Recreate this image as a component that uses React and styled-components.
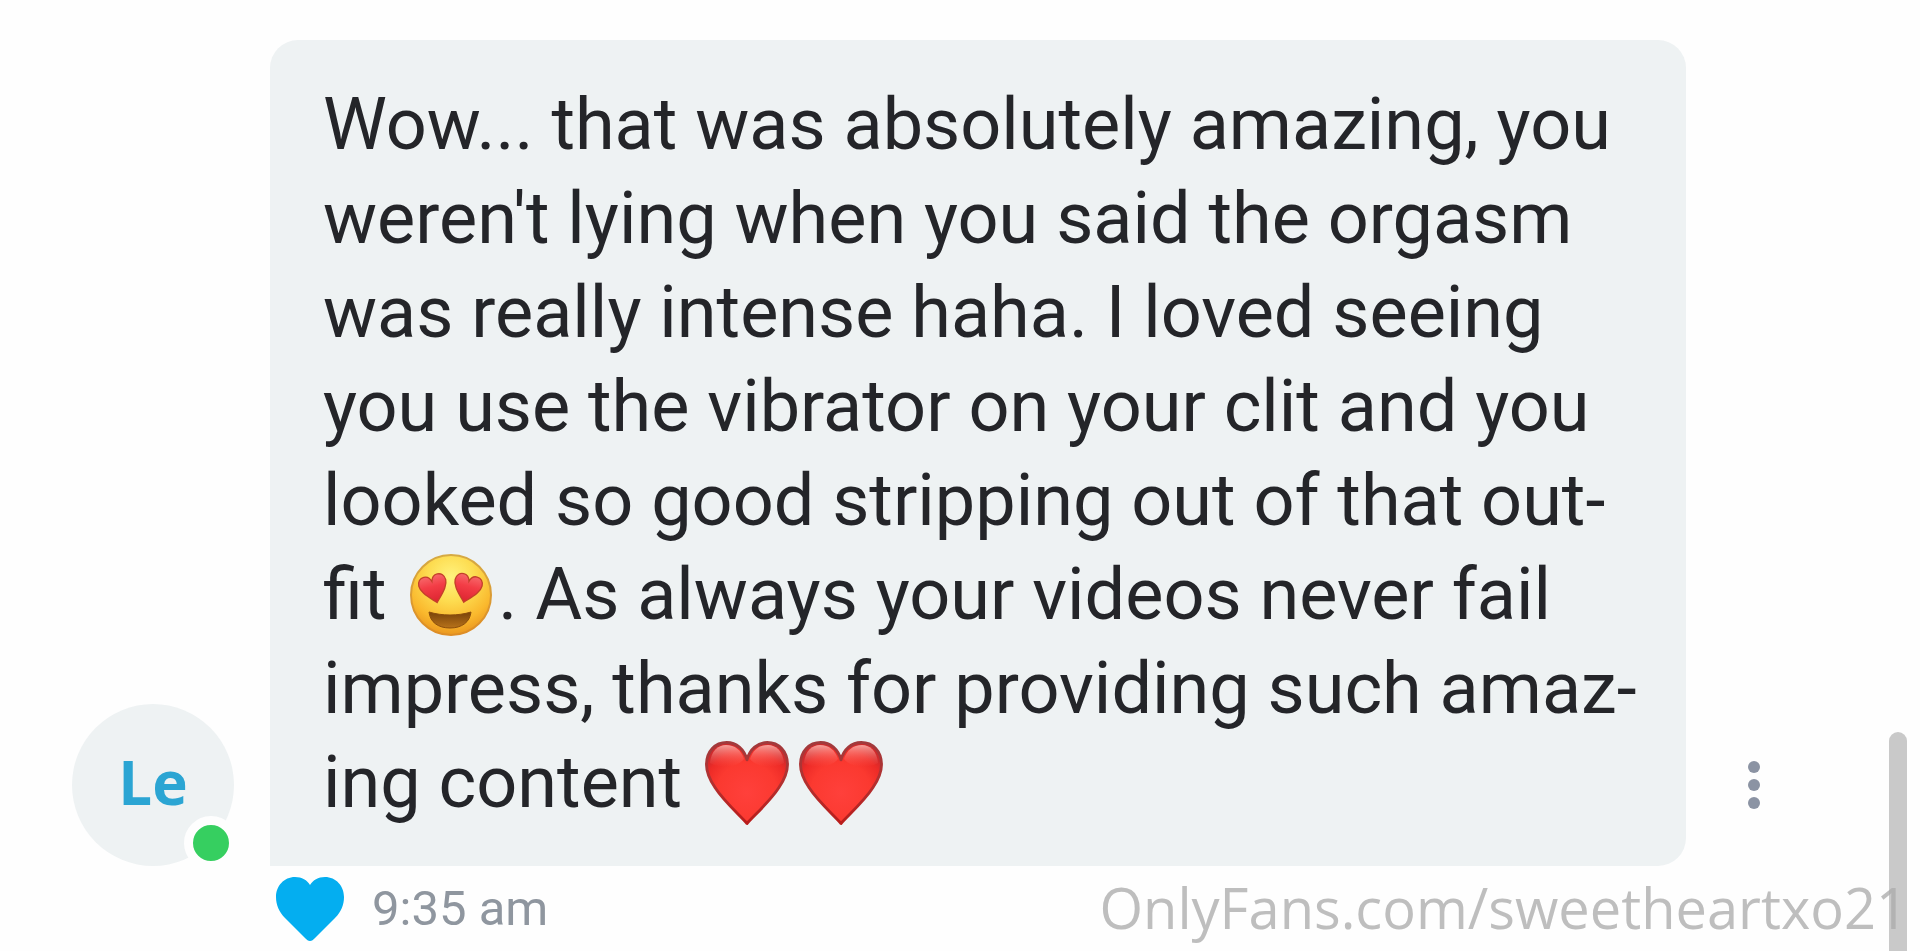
import React from "react";
import styled, { createGlobalStyle } from "styled-components";

const GlobalStyle = createGlobalStyle`
  *, *::before, *::after { box-sizing: border-box; }
  body {
    margin: 0;
    background: #fefefe;
    color: #242529;
    font-family: Roboto, "Liberation Sans", sans-serif;
  }
`;

const Thread = styled.main`
  position: relative;
  min-height: 100vh;
  padding-top: 40px;
  overflow: hidden;
`;

const MessageRow = styled.article`
  display: flex;
  align-items: flex-end;
  gap: 36px;
  padding: 0 134px 0 72px;
`;

const Avatar = styled.a`
  position: relative;
  flex: none;
  display: flex;
  align-items: center;
  justify-content: center;
  width: 162px;
  height: 162px;
  padding-bottom: 6px;
  border-radius: 50%;
  background: #eef2f3;
  color: #2ba5d3;
  font-family: "Open Sans", "Noto Sans", sans-serif;
  font-size: 60px;
  font-weight: 700;
  line-height: 72px;
  text-decoration: none;
`;

const OnlineBadge = styled.span`
  position: absolute;
  right: -4px;
  bottom: -4px;
  width: 54px;
  height: 54px;
  border: 9px solid #fefefe;
  border-radius: 50%;
  background: #36cf60;
`;

const Bubble = styled.div`
  flex: 1;
  min-width: 0;
  padding: 38px 0 36px 53px;
  border-radius: 28px 28px 28px 0;
  background: #eef2f3;
`;

const MessageText = styled.p`
  margin: 0;
  font-size: 72px;
  line-height: 94px;
`;

const Line = styled.span`
  display: block;
  white-space: nowrap;
`;

const MenuButton = styled.button`
  flex: none;
  display: flex;
  flex-direction: column;
  align-items: center;
  justify-content: center;
  gap: 6px;
  width: 64px;
  height: 162px;
  padding: 0;
  border: 0;
  background: none;
`;

const MenuDot = styled.span`
  width: 12px;
  height: 12px;
  border-radius: 50%;
  background: #8b93a3;
`;

const Meta = styled.footer`
  display: flex;
  align-items: center;
  height: 85px;
  padding: 0 12px 0 276px;
`;

const LikeButton = styled.button`
  display: flex;
  padding: 0;
  border: 0;
  background: none;
`;

const Time = styled.time`
  margin-left: 28px;
  color: #8f969f;
  font-size: 49px;
  line-height: 56px;
`;

const Watermark = styled.span`
  margin-left: auto;
  padding-bottom: 4px;
  z-index: 1;
  color: rgba(172, 172, 172, 0.78);
  font-family: "Open Sans", "Noto Sans", sans-serif;
  font-size: 56px;
  line-height: 72px;
  white-space: nowrap;
`;

const ScrollThumb = styled.div`
  position: absolute;
  top: 732px;
  right: 13px;
  bottom: 0;
  width: 18px;
  border-radius: 9px 9px 0 0;
  background: #c9c9c9;
`;

const Emoji = styled.svg`
  width: 84px;
  height: 84px;
  margin: 0 5px;
  vertical-align: -18px;
`;

const HEART =
  "M42 84C35 76 18 61 9 47C3 38 0 31 0 23C0 9 9 0 21 0C31 0 39 7 42 18C45 7 53 0 63 0C75 0 84 9 84 23C84 31 81 38 75 47C66 61 49 76 42 84Z";

function RedHeart() {
  return (
    <Emoji viewBox="0 0 84 84" role="img" aria-label="Red heart">
      <defs>
        <radialGradient id="heartFill" cx="50%" cy="62%" r="62%">
          <stop offset="0" stopColor="#ff403b" />
          <stop offset="0.6" stopColor="#fb3930" />
          <stop offset="0.86" stopColor="#ed2b27" />
          <stop offset="1" stopColor="#cf2a2c" />
        </radialGradient>
        <linearGradient id="heartShine" x1="0" y1="0" x2="0" y2="1">
          <stop offset="0" stopColor="#ffb5ae" stopOpacity="0.85" />
          <stop offset="1" stopColor="#ff6058" stopOpacity="0" />
        </linearGradient>
        <linearGradient id="heartEdge" x1="0" y1="0" x2="0" y2="1">
          <stop offset="0" stopColor="#a23a3c" />
          <stop offset="0.5" stopColor="#b3302f" />
          <stop offset="1" stopColor="#b91d1b" />
        </linearGradient>
      </defs>
      <path
        d={HEART}
        transform="translate(1.5 1.5) scale(.964)"
        fill="url(#heartFill)"
        stroke="url(#heartEdge)"
        strokeWidth="3"
        strokeLinejoin="round"
      />
      <path d="M5 22C6 10 13 4 21 4C30 4 36 9 39 18C32 27 16 28 5 22Z" fill="url(#heartShine)" />
      <path d="M79 22C78 10 71 4 63 4C54 4 48 9 45 18C52 27 68 28 79 22Z" fill="url(#heartShine)" />
    </Emoji>
  );
}

function HeartEyes() {
  return (
    <Emoji viewBox="0 0 84 84" role="img" aria-label="Smiling face with heart eyes">
      <defs>
        <radialGradient id="face" cx="50%" cy="28%" r="74%">
          <stop offset="0" stopColor="#fff37f" />
          <stop offset="0.4" stopColor="#fddc50" />
          <stop offset="0.75" stopColor="#fab82d" />
          <stop offset="1" stopColor="#e8931d" />
        </radialGradient>
        <linearGradient id="faceEdge" x1="0" y1="0" x2="0" y2="1">
          <stop offset="0" stopColor="#d6aa43" />
          <stop offset="1" stopColor="#de8d24" />
        </linearGradient>
        <linearGradient id="eye" x1="0" y1="0" x2="0" y2="1">
          <stop offset="0" stopColor="#f7686a" />
          <stop offset="0.4" stopColor="#f33d46" />
          <stop offset="1" stopColor="#dc2330" />
        </linearGradient>
        <linearGradient id="mouth" x1="0" y1="0" x2="0" y2="1">
          <stop offset="0" stopColor="#79430a" />
          <stop offset="1" stopColor="#b7721a" />
        </linearGradient>
      </defs>
      <circle cx="42" cy="42" r="40" fill="url(#face)" stroke="url(#faceEdge)" strokeWidth="2" />
      <g fill="url(#eye)" stroke="#c3402a" strokeWidth="4">
        <path d={HEART} transform="translate(8 26) rotate(-14) scale(.33)" />
        <path d={HEART} transform="translate(48 19) rotate(14) scale(.33)" />
      </g>
      <path
        d="M20 59C33 63 49 63 62 59C61 69 53 75 41 75C29 75 21 69 20 59Z"
        fill="url(#mouth)"
        stroke="#8a4d0c"
        strokeWidth="1"
        strokeLinejoin="round"
      />
    </Emoji>
  );
}

export default function App() {
  return (
    <>
      <GlobalStyle />
      <Thread>
        <MessageRow>
          <Avatar href="#profile" aria-label="Le, online">
            Le
            <OnlineBadge />
          </Avatar>
          <Bubble>
            <MessageText>
              <Line>Wow... that was absolutely amazing, you</Line>
              <Line>weren't lying when you said the orgasm</Line>
              <Line>was really intense haha. I loved seeing</Line>
              <Line>you use the vibrator on your clit and you</Line>
              <Line>looked so good stripping out of that out-</Line>
              <Line>
                fit <HeartEyes />. As always your videos never fail
              </Line>
              <Line>impress, thanks for providing such amaz-</Line>
              <Line>
                ing content <RedHeart />
                <RedHeart />
              </Line>
            </MessageText>
          </Bubble>
          <MenuButton type="button" aria-label="Message options">
            <MenuDot />
            <MenuDot />
            <MenuDot />
          </MenuButton>
        </MessageRow>
        <Meta>
          <LikeButton type="button" aria-label="Unlike message">
            <svg width="68" height="64" viewBox="0 0 68 64" aria-hidden="true">
              <path
                d="M34 64C32 64 31 63 29 61L9 41C3 35 0 28 0 20C0 9 8 0 19 0C26 0 31 3 34 8C37 3 42 0 49 0C60 0 68 9 68 20C68 28 65 35 59 41L39 61C37 63 36 64 34 64Z"
                fill="#04aef0"
              />
            </svg>
          </LikeButton>
          <Time>9:35 am</Time>
          <Watermark>OnlyFans.com/sweetheartxo21</Watermark>
        </Meta>
        <ScrollThumb aria-hidden="true" />
      </Thread>
    </>
  );
}
